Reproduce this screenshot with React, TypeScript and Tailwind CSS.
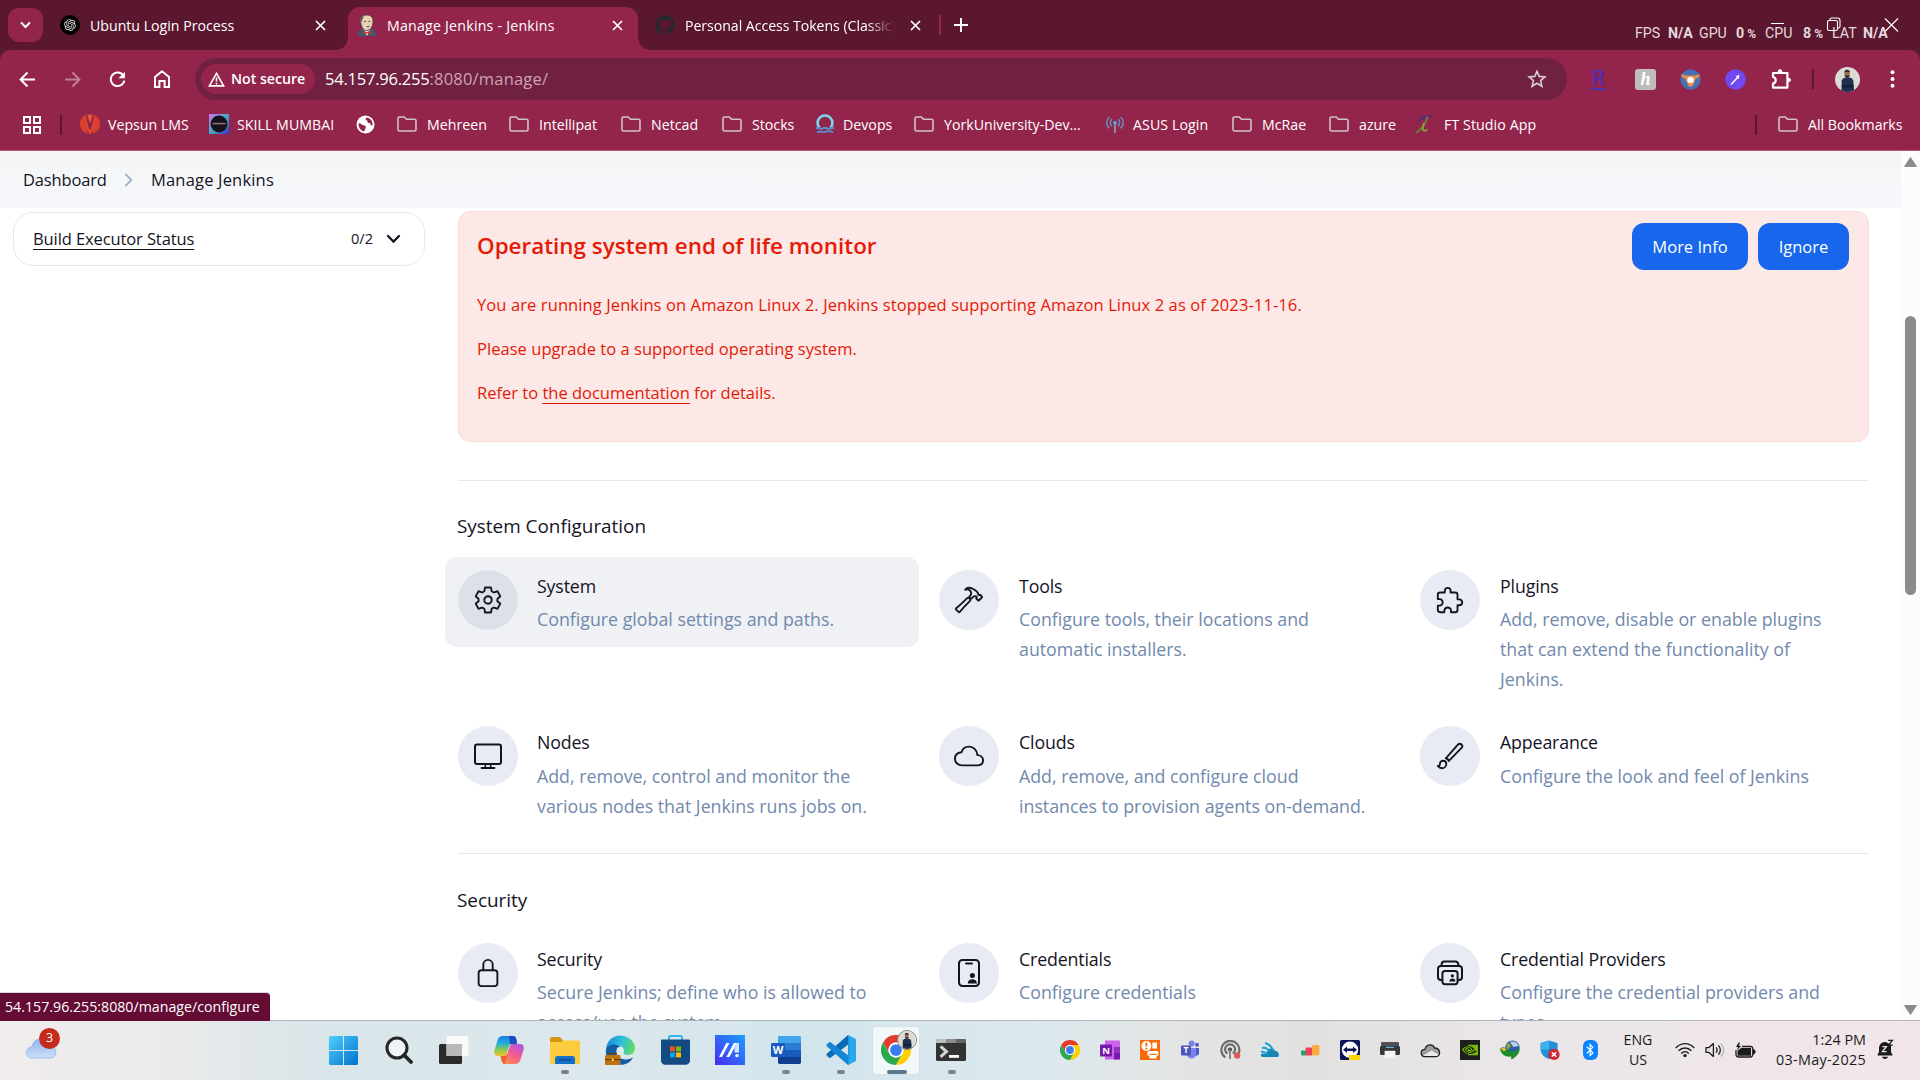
import type { ReactNode } from "react";
import {
  IoSettingsOutline,
  IoHammerOutline,
  IoExtensionPuzzleOutline,
  IoCloudOutline,
  IoBrushOutline,
  IoLockClosedOutline,
} from "react-icons/io5";
import { RiOpenaiFill } from "react-icons/ri";
import { FaGithub, FaBluetoothB } from "react-icons/fa";
import { SiNvidia } from "react-icons/si";

/* ---------- small drawings ---------- */

function ChromeLogo({ size }: { size: number }) {
  return (
    <svg width={size} height={size} viewBox="0 0 48 48">
      <path d="M24 12H44.8A24 24 0 0 0 3.2 12L13.6 30A12 12 0 0 1 24 12Z" fill="#e33b2e" />
      <path d="M13.6 30L3.2 12A24 24 0 0 0 24 48L34.4 30A12 12 0 0 1 13.6 30Z" fill="#2da94f" />
      <path d="M34.4 30L24 48A24 24 0 0 0 44.8 12H24A12 12 0 0 1 34.4 30Z" fill="#fdd000" />
      <circle cx="24" cy="24" r="12" fill="#fff" />
      <circle cx="24" cy="24" r="9.4" fill="#3b7ded" />
    </svg>
  );
}

function Folder() {
  return (
    <svg width="20" height="16" viewBox="0 0 20 16" fill="none" stroke="#cdc3c6" strokeWidth="1.6" strokeLinejoin="round">
      <path d="M1 2.6C1 1.7 1.6 1 2.5 1H7.4L9.4 3.2H17.5C18.4 3.2 19 3.9 19 4.8V13.2C19 14.2 18.4 15 17.5 15H2.5C1.6 15 1 14.2 1 13.2Z" />
    </svg>
  );
}

function Close({ size = 11 }: { size?: number }) {
  return (
    <svg width={size} height={size} viewBox="0 0 11 11" stroke="#fff" strokeWidth="1.7" fill="none">
      <path d="M1 1L10 10M10 1L1 10" />
    </svg>
  );
}

function Avatar({ size }: { size: number }) {
  return (
    <svg width={size} height={size} viewBox="0 0 26 26" className="rounded-full">
      <rect width="26" height="26" fill="#dcdad5" />
      <path d="M6.6 26L7 14C8 11.5 10 11 13 11S18 11.5 19 14L20 26Z" fill="#1f3150" />
      <path d="M7.4 20H19" stroke="#10203a" strokeWidth="2.4" />
      <ellipse cx="12.6" cy="6.8" rx="2.8" ry="4" fill="#9a6f58" />
      <path d="M9.8 5.6C9.6 2 15.6 2 15.4 5.6C14 4.6 11 4.6 9.8 5.6ZM10 8.2C10.6 12.2 14.8 12.2 15.2 8.2C14 9.2 11.2 9.2 10 8.2Z" fill="#2a2322" />
    </svg>
  );
}

function JenkinsFace() {
  return (
    <svg width="20" height="22" viewBox="0 0 20 22">
      <path d="M1 22C1 17 3 15.5 6 14.8L14 14.6C17 15.2 18.6 17 19 22Z" fill="#3f5a70" />
      <path d="M6.5 14.5L10 22L13.5 14.5Z" fill="#f2efea" />
      <path d="M3.6 6C3.6 2.4 6.6 1 10 1C13.6 1 16 3.4 16 7.2C16 12.8 13.2 16.6 9.6 16.6C6 16.6 3.6 12 3.6 6Z" fill="#e9d2b4" stroke="#4b3f38" strokeWidth=".9" />
      <path d="M3.4 9.6C2.6 5 4 2 7 1.2L5.4 6Z" fill="#6d5d50" />
      <path d="M7.2 7.4H8.8M11.6 7.4H13.2M9.6 12.4C10.6 13 12 12.8 12.6 12" stroke="#3a302b" strokeWidth="1" fill="none" />
      <path d="M9.6 18.2L6.8 16.8V20.4L9.8 19.2L13.4 20.6V16.6Z" fill="#d33a2f" />
    </svg>
  );
}

/* ---------- tab strip ---------- */

function Tabs() {
  return (
    <div className="relative flex h-[50px] shrink-0 bg-[#5c1730] text-[14.15px] text-white">
      <div className="flex w-[58px] items-center pl-[8px]">
        <div className="flex h-[34px] w-[35px] items-center justify-center rounded-[11px] bg-[#93254c]">
          <svg width="11" height="8" viewBox="0 0 11 8" stroke="#fff" strokeWidth="2" fill="none">
            <path d="M1 1.4L5.5 6L10 1.4" />
          </svg>
        </div>
      </div>

      <div className="flex w-[290px] items-center pl-[2px]">
        <span className="flex size-[20px] items-center justify-center rounded-full bg-black">
          <RiOpenaiFill size={14} color="#e8e8e8" />
        </span>
        <span className="ml-[10px] w-[225px] pt-px">Ubuntu Login Process</span>
        <Close />
      </div>

      <div className="relative mt-[7px] flex w-[290px] items-center rounded-t-[12px] bg-[#93254c] pb-[7px] pl-[9px]">
        <span className="absolute bottom-0 -left-[12px] size-[12px] bg-[radial-gradient(circle_at_0_0,transparent_11.5px,#93254c_12px)]" />
        <span className="absolute -right-[12px] bottom-0 size-[12px] bg-[radial-gradient(circle_at_100%_0,transparent_11.5px,#93254c_12px)]" />
        <JenkinsFace />
        <span className="ml-[10px] w-[225px] pt-px tracking-[0.24px]">Manage Jenkins - Jenkins</span>
        <Close />
      </div>

      <div className="flex w-[301px] items-center pl-[17px]">
        <FaGithub size={20} color="#24292e" />
        <span className="ml-[10px] w-[214px] overflow-hidden pt-px tracking-[-0.05px] whitespace-nowrap [mask-image:linear-gradient(to_right,#000_85%,transparent_98%)]">
          Personal Access Tokens (Classic)
        </span>
        <span className="ml-[11px]">
          <Close />
        </span>
      </div>
      <div className="mt-[15px] h-[20px] w-[2px] bg-[#93254c]" />
      <div className="flex items-center pl-[13px]">
        <svg width="14" height="14" viewBox="0 0 14 14" stroke="#fff" strokeWidth="2">
          <path d="M7 0V14M0 7H14" />
        </svg>
      </div>

      {/* window buttons with the performance read-out lying over them */}
      <svg className="absolute top-[16px] left-[1765px]" width="140" height="18" viewBox="0 0 140 18" stroke="#fff" fill="none" strokeWidth="1.1">
        <path d="M6 7.5H19M120 2.5L133 15.5M133 2.5L120 15.5" />
        <rect x="62.5" y="4.5" width="10" height="10" rx="1.5" />
        <path d="M65 4.5V3.5A1.5 1.5 0 0 1 66.5 2H72.5A2.5 2.5 0 0 1 75 4.5V10.5A1.5 1.5 0 0 1 73.5 12H72.5" />
      </svg>
      <div className="absolute top-[25px] left-[1635px] flex h-[18px] items-center font-['Roboto'] text-[14.2px] whitespace-nowrap text-[#e6d9de]">
        <span className="w-[33px]">FPS</span>
        <b className="w-[31px]">N/A</b>
        <span className="w-[37px]">GPU</span>
        <b className="w-[29px]">0<span className="ml-[3px] text-[12px]">%</span></b>
        <span className="w-[38px]">CPU</span>
        <b className="w-[29px]">8<span className="ml-[3px] text-[12px]">%</span></b>
        <span className="w-[31px]">LAT</span>
        <b>N/A</b>
      </div>
    </div>
  );
}

/* ---------- toolbar ---------- */

function Toolbar() {
  return (
    <div className="flex h-[58px] shrink-0 items-center rounded-t-[10px] bg-[#93254c]">
      <div className="flex w-[195px] items-center pl-[19px]">
        <svg width="17" height="17" viewBox="0 0 17 17" stroke="#fff" strokeWidth="2" fill="none">
          <path d="M16 8.5H2M8.5 1.5L1.6 8.5L8.5 15.5" />
        </svg>
        <svg className="ml-[28px]" width="17" height="17" viewBox="0 0 17 17" stroke="#c27d97" strokeWidth="2" fill="none">
          <path d="M1 8.5H15M8.5 1.5L15.4 8.5L8.5 15.5" />
        </svg>
        <svg className="ml-[28px]" width="17" height="17" viewBox="0 0 17 17" fill="none">
          <path d="M14.6 5A6.8 6.8 0 1 0 15.3 9.6" stroke="#fff" strokeWidth="2" />
          <path d="M15.9 0.8V7.2H9.5Z" fill="#fff" />
        </svg>
        <svg className="ml-[28px]" width="16" height="18" viewBox="0 0 16 18" stroke="#fff" strokeWidth="2" fill="none">
          <path d="M1 7L8 1.3L15 7V17H10.6V11H5.4V17H1Z" />
        </svg>
      </div>

      <div className="flex h-[42px] w-[1372px] items-center rounded-full bg-[#702040] pl-[6px]">
        <div className="flex h-[30px] w-[114px] items-center rounded-full bg-[#93254c] pl-[7px] text-white">
          <svg width="17" height="15" viewBox="0 0 17 15" stroke="#fff" strokeWidth="1.6" fill="none">
            <path d="M8.5 1.4L15.6 13.9H1.4Z" />
            <path d="M8.5 5.6V9.6M8.5 10.8V12.4" />
          </svg>
          <span className="ml-[6px] text-[14.15px] font-semibold whitespace-nowrap">Not secure</span>
        </div>
        <div className="ml-[10px] w-[1202px] pt-px text-[16.5px] whitespace-nowrap text-[#cfa3b4]">
          <span className="tracking-[-0.22px] text-white">54.157.96.255</span>
          <span className="tracking-[0.2px]">:8080/manage/</span>
        </div>
        <svg width="20" height="20" viewBox="0 0 20 20" fill="none" stroke="#d9ccd1" strokeWidth="1.6">
          <path d="M10 2.2L12.2 7.4L17.9 7.9L13.6 11.6L14.9 17.2L10 14.2L5.1 17.2L6.4 11.6L2.1 7.9L7.8 7.4Z" />
        </svg>
      </div>

      <div className="flex flex-1 items-center">
        <span className="ml-[24px] flex w-[15px] justify-center border-b-2 border-[#4634a8] font-['Roboto'] text-[20px] leading-[19px] font-bold text-[#5b2aa6]">R</span>
        <span className="ml-[29px] flex size-[21px] items-center justify-center rounded-[3px] bg-[#bdbdbd] font-['Liberation_Serif'] text-[18px] leading-none font-bold text-white italic">
          h
        </span>
        <svg className="ml-[24px]" width="21" height="21" viewBox="0 0 21 21">
          <circle cx="10.5" cy="10.5" r="10.2" fill="#4471b4" />
          <path d="M1 5L6 6.6H15L20 5L18.6 8.4L15.4 10L13 16.6L10.5 18L8 16.6L5.6 10L2.4 8.4Z" fill="#ef8c4a" />
          <circle cx="10.5" cy="11" r="3.2" fill="#fff" />
        </svg>
        <svg className="ml-[24px]" width="21" height="21" viewBox="0 0 21 21">
          <circle cx="10.5" cy="10.5" r="10.3" fill="#7149f2" />
          <path d="M6 15.4L12.4 8.8" stroke="#fff" strokeWidth="1.4" />
          <path d="M10.6 7.4L14.4 5.6L13.8 10.2Z" fill="#fff" />
        </svg>
        <svg className="ml-[24px]" width="22" height="22" viewBox="0 0 22 22">
          <path
            d="M3 5H17.4V19.6H3V15.6C6.6 15.2 6.6 9.4 3 9Z"
            fill="none"
            stroke="#fff"
            strokeWidth="2.2"
            strokeLinejoin="round"
          />
          <path d="M7.6 4.6C7.4 .2 12.6 .2 12.4 4.6ZM17.8 9.8C22 9.6 22 14.6 17.8 14.4Z" fill="#fff" />
        </svg>
        <span className="ml-[20px] h-[20px] w-[2px] bg-[#5c1730]" />
        <span className="ml-[21px]">
          <Avatar size={25} />
        </span>
        <svg className="ml-[30px]" width="5" height="18" viewBox="0 0 5 18" fill="#fff">
          <circle cx="2.5" cy="2.2" r="2" />
          <circle cx="2.5" cy="9" r="2" />
          <circle cx="2.5" cy="15.8" r="2" />
        </svg>
      </div>
    </div>
  );
}

/* ---------- bookmarks ---------- */

const vepsun = (
  <svg width="20" height="20" viewBox="0 0 20 20">
    <path d="M6 .8C2 2.6 0 6 0 10C0 14.4 2.8 18.4 7.2 19.6L8 13Z" fill="#d9402c" />
    <path d="M14 .8C18 2.6 20 6 20 10C20 14.4 17.2 18.4 12.8 19.6L12 13Z" fill="#d9402c" />
    <path d="M7.4 .4H12.6L10.6 8H9.4Z" fill="#e65a3c" />
    <path d="M4 3L9 19.8H11L16 3L10.6 15.4H9.4Z" fill="#e8492f" />
  </svg>
);
const skill = (
  <svg width="20" height="20" viewBox="0 0 20 20">
    <defs>
      <linearGradient id="sk" x1="0" y1="0" x2="1" y2="1">
        <stop offset="0" stopColor="#d86bf0" />
        <stop offset=".4" stopColor="#58a8d0" />
        <stop offset=".6" stopColor="#3f9ac0" />
        <stop offset="1" stopColor="#3a2fd0" />
      </linearGradient>
    </defs>
    <rect width="20" height="20" fill="url(#sk)" />
    <circle cx="10" cy="10" r="8.4" fill="#14121a" />
    <path d="M3.4 9.6H16.6" stroke="#8d6f6f" strokeWidth="1.6" />
  </svg>
);
const globe = (
  <svg width="19" height="19" viewBox="0 0 19 19">
    <circle cx="9.5" cy="9.5" r="9" fill="#fff" />
    <path d="M2.6 8.4C5 8 5.4 10.4 8.4 10.4C11 10.6 9.4 13.4 8.2 16.4C5 16 2 12 2.6 8.4Z" fill="#93254c" />
    <path d="M10.6 2.4C9 3.4 9.6 5.4 11.4 5.4C11 7.6 12.4 8.4 14 8C14.4 10 15.4 10.6 16.6 10.4C17 6.4 14.6 3 10.6 2.4Z" fill="#93254c" />
  </svg>
);
const devops = (
  <svg width="20" height="20" viewBox="0 0 20 20" fill="none">
    <path d="M4.6 14A7.4 7.4 0 1 1 15.4 14" stroke="#7fd6ea" strokeWidth="2.6" />
    <path d="M1 14.6C3.6 12 5.4 16 7.6 14.6C9 13.6 11 13.6 12.4 14.6C14.6 16 16.4 12 19 14.6M2 18.4C6 16 8 19 10 18S15 16.6 18 18.4" stroke="#5b8fd0" strokeWidth="1.9" />
  </svg>
);
const asus = (
  <svg width="20" height="20" viewBox="0 0 20 20" fill="none" stroke="#6f86b4" strokeWidth="1.7">
    <path d="M4.4 3C.8 6.4 .8 11 4.4 14.4M7 5.2C4.8 7.2 4.8 10.2 7 12.2M15.6 3C19.2 6.4 19.2 11 15.6 14.4M13 5.2C15.2 7.2 15.2 10.2 13 12.2" />
    <circle cx="10" cy="8.7" r="1.8" fill="#49b6e8" stroke="none" />
    <path d="M10 10V19" stroke="#8f9bbd" />
  </svg>
);
const ft = (
  <svg width="20" height="20" viewBox="0 0 20 20" fill="none">
    <path d="M4 7C8 3 12 2.6 18 2" stroke="#4b2f7d" strokeWidth="1.8" />
    <path d="M13.6 2.6C12 9 8 15 2.4 18.8" stroke="#6d8a40" strokeWidth="1.8" />
    <path d="M9.8 9C8 15 8.6 19 13.4 15.6" stroke="#84a63c" strokeWidth="1.8" />
  </svg>
);

function Bookmark({ icon, label, className }: { icon?: ReactNode; label?: string; className: string }) {
  return (
    <div className={`flex shrink-0 items-center whitespace-nowrap ${className}`}>
      <span className="flex w-[20px] justify-center">{icon ?? <Folder />}</span>
      {label && <span className={icon ? "ml-[8px]" : "ml-[10px]"}>{label}</span>}
    </div>
  );
}

function Bookmarks() {
  return (
    <div className="flex h-[43px] shrink-0 items-center border-b border-[#b4597b] bg-[#93254c] pb-[9px] text-[14.2px] text-white">
      <svg className="ml-[23px]" width="18" height="18" viewBox="0 0 18 18" fill="none" stroke="#fff" strokeWidth="2">
        <path d="M1 1H7V7H1ZM11 1H17V7H11ZM1 11H7V17H1ZM11 11H17V17H11Z" />
      </svg>
      <span className="mr-[18px] ml-[19px] h-[20px] w-[2px] bg-[#5c1730]" />
      <Bookmark icon={vepsun} label="Vepsun LMS" className="w-[129px]" />
      <Bookmark icon={skill} label="SKILL MUMBAI" className="w-[146px] tracking-[0.03px]" />
      <Bookmark icon={globe} className="w-[42px]" />
      <Bookmark label="Mehreen" className="w-[112px]" />
      <Bookmark label="Intellipat" className="w-[112px]" />
      <Bookmark label="Netcad" className="w-[101px]" />
      <Bookmark label="Stocks" className="w-[93px]" />
      <Bookmark icon={devops} label="Devops" className="w-[99px]" />
      <Bookmark label="YorkUniversity-Dev..." className="w-[191px]" />
      <Bookmark icon={asus} label="ASUS Login" className="w-[127px] tracking-[0.08px]" />
      <Bookmark label="McRae" className="w-[97px]" />
      <Bookmark label="azure" className="w-[85px]" />
      <Bookmark icon={ft} label="FT Studio App" className="w-[341px] gap-[2px] tracking-[0.08px]" />
      <span className="mr-[21px] h-[20px] w-[2px] bg-[#5c1730]" />
      <Bookmark label="All Bookmarks" className="w-[130px]" />
    </div>
  );
}

/* ---------- Jenkins page ---------- */

const monitor = (
  <svg width="30" height="30" viewBox="0 0 30 30" fill="none" stroke="#14141f" strokeWidth="2" strokeLinejoin="round">
    <rect x="2" y="3.6" width="26" height="19.4" rx="2" />
    <path d="M8.6 27H21.4" strokeLinecap="round" />
    <path d="M12.6 23L12 27H18L17.4 23" strokeWidth="1.6" />
  </svg>
);
const credentials = (
  <svg width="30" height="30" viewBox="0 0 30 30" fill="none" stroke="#14141f" strokeWidth="2">
    <rect x="5" y="2" width="20" height="26" rx="3.4" />
    <path d="M12 5.6H18" strokeLinecap="round" />
    <circle cx="18.4" cy="17.6" r="2.5" fill="#14141f" stroke="none" />
    <path d="M13.8 25.4C13.8 19.8 23 19.8 23 25.4Z" fill="#14141f" stroke="none" />
  </svg>
);
const providers = (
  <svg width="30" height="30" viewBox="0 0 30 30" fill="none" stroke="#14141f" strokeWidth="2" strokeLinejoin="round">
    <path d="M6.6 8V6.6A3 3 0 0 1 9.6 3.6H20.4A3 3 0 0 1 23.4 6.6V8" />
    <path d="M7.4 22H6A3 3 0 0 1 3 19V11A3 3 0 0 1 6 8H24A3 3 0 0 1 27 11V19A3 3 0 0 1 24 22H22.6" />
    <rect x="7.4" y="13" width="15.2" height="13.2" rx="2.6" />
    <circle cx="17.4" cy="17.8" r="1.6" fill="#14141f" stroke="none" />
    <path d="M14.4 23.4C14.4 19.6 20.4 19.6 20.4 23.4Z" fill="#14141f" stroke="none" />
  </svg>
);

type Item = { title: string; lines: string[]; icon: ReactNode; hovered?: boolean };

const systemItems: Item[] = [
  { title: "System", lines: ["Configure global settings and paths."], icon: <IoSettingsOutline size={30} />, hovered: true },
  { title: "Tools", lines: ["Configure tools, their locations and", "automatic installers."], icon: <IoHammerOutline size={30} /> },
  {
    title: "Plugins",
    lines: ["Add, remove, disable or enable plugins", "that can extend the functionality of", "Jenkins."],
    icon: <IoExtensionPuzzleOutline size={30} />,
  },
  { title: "Nodes", lines: ["Add, remove, control and monitor the", "various nodes that Jenkins runs jobs on."], icon: monitor },
  { title: "Clouds", lines: ["Add, remove, and configure cloud", "instances to provision agents on-demand."], icon: <IoCloudOutline size={30} /> },
  { title: "Appearance", lines: ["Configure the look and feel of Jenkins"], icon: <IoBrushOutline size={30} /> },
];

const securityItems: Item[] = [
  { title: "Security", lines: ["Secure Jenkins; define who is allowed to", "access/use the system."], icon: <IoLockClosedOutline size={30} /> },
  { title: "Credentials", lines: ["Configure credentials"], icon: credentials },
  { title: "Credential Providers", lines: ["Configure the credential providers and", "types"], icon: providers },
];

function ItemGrid({ items }: { items: Item[] }) {
  return (
    <div className="-mx-[13px] grid grid-cols-[474px_474px_474px] items-start gap-x-[7px] gap-y-[6px]">
      {items.map((it, i) => (
        <div key={it.title} className={`flex rounded-[12px] p-[13px] text-[17.8px] leading-[30px] ${it.hovered ? "bg-[#eff1f5]" : ""}`}>
          <div className={`flex size-[60px] shrink-0 items-center justify-center rounded-full text-[#14141f] ${it.hovered ? "bg-[#dce1e9]" : "bg-[#e8ebf3]"}`}>
            {it.icon}
          </div>
          <div className={`whitespace-nowrap ${i % 3 === 0 ? "ml-[19px]" : "ml-[20px]"}`}>
            <div className={`pt-px tracking-[-0.15px] text-[#14141f] ${i > 2 ? "pb-[4px]" : "pb-[3px]"}`}>{it.title}</div>
            <div className="text-[#7189ad]">
              {it.lines.map((l) => (
                <div key={l}>{l}</div>
              ))}
            </div>
          </div>
        </div>
      ))}
    </div>
  );
}

function Page() {
  return (
    <div className="flex min-h-0 flex-1 bg-white">
      <div className="flex min-w-0 flex-1 flex-col overflow-hidden">
        <nav className="flex h-[57px] shrink-0 items-center bg-[linear-gradient(to_bottom,#f3f5f5,#f5f7fa_70%)] pt-px pl-[23px] text-[16.5px] text-[#14141f]">
          <span className="w-[101px] tracking-[-0.15px]">Dashboard</span>
          <svg width="9" height="14" viewBox="0 0 9 14" fill="none" stroke="#9fb0cb" strokeWidth="1.8">
            <path d="M1.4 1L7.4 7L1.4 13" />
          </svg>
          <span className="ml-[18px] tracking-[0.18px]">Manage Jenkins</span>
        </nav>
        <div className="flex min-h-0 flex-1 overflow-hidden">
          <aside className="w-[458px] shrink-0 pt-[4px] pl-[13px]">
            <div className="flex h-[54px] w-[412px] items-center rounded-[20px] border border-[#e8e8f2] pr-[23px] pl-[19px] text-[16.5px] text-[#14141f]">
              <span className="pt-px tracking-[-0.1px] underline decoration-1 underline-offset-[4px]">Build Executor Status</span>
              <span className="mr-[13px] ml-auto text-[14.6px]">0/2</span>
              <svg width="15" height="10" viewBox="0 0 15 10" fill="none" stroke="#14141f" strokeWidth="2.2" strokeLinecap="round">
                <path d="M2 2L7.5 7.6L13 2" />
              </svg>
            </div>
          </aside>
          <main className="w-[1411px] shrink-0 pt-[3px]">
            <section className="flex h-[231px] justify-between rounded-[12px] border border-[#fadbd7] bg-[#fce8e6] pr-[19px] pl-[18px] text-[16.5px] text-[#e51a06]">
              <div>
                <h2 className="mt-[18px] text-[22.4px] leading-[32px] font-semibold tracking-[0.02px]">Operating system end of life monitor</h2>
                <p className="mt-[28px] leading-[30px] tracking-[0.1px]">
                  You are running Jenkins on Amazon Linux 2. Jenkins stopped supporting Amazon Linux 2 as of 2023-11-16.
                </p>
                <p className="mt-[14px] leading-[30px] tracking-[0.04px]">Please upgrade to a supported operating system.</p>
                <p className="mt-[14px] leading-[30px]">
                  Refer to <span className="underline decoration-1 underline-offset-[4px]">the documentation</span> for details.
                </p>
              </div>
              <div className="mt-[11px] flex gap-[10px] text-white">
                <span className="flex h-[47px] w-[116px] items-center justify-center rounded-[12px] bg-[#1866ec] pt-[2px]">More Info</span>
                <span className="flex h-[47px] w-[91px] items-center justify-center rounded-[12px] bg-[#1866ec] pt-[2px]">Ignore</span>
              </div>
            </section>

            <hr className="mt-[38px] border-t border-[#e7e7ea]" />
            <h3 className="mt-[30px] mb-[16px] -ml-px text-[18.9px] leading-[30px] text-[#14141f]">System Configuration</h3>
            <ItemGrid items={systemItems} />

            <hr className="mt-[19px] border-t border-[#e7e7ea]" />
            <h3 className="mt-[31px] mb-[15px] -ml-px text-[18.9px] leading-[30px] text-[#14141f]">Security</h3>
            <ItemGrid items={securityItems} />
          </main>
        </div>
      </div>

      <div className="flex w-[19px] shrink-0 flex-col items-center bg-[#fcfcfc]">
        <svg className="mt-[6px]" width="13" height="10" viewBox="0 0 13 10" fill="#8b8b8b">
          <path d="M6.5 0.6L12.4 9.4H0.6Z" stroke="#8b8b8b" strokeLinejoin="round" />
        </svg>
        <div className="mt-[149px] h-[279px] w-[11px] rounded-full bg-[#8b8b8b]" />
        <svg className="mt-auto mb-[5px]" width="13" height="10" viewBox="0 0 13 10" fill="#8b8b8b">
          <path d="M6.5 9.4L12.4 0.6H0.6Z" stroke="#8b8b8b" strokeLinejoin="round" />
        </svg>
      </div>
    </div>
  );
}

/* ---------- taskbar ---------- */

const startIcon = (
  <svg width="29" height="29" viewBox="0 0 29 29">
    <defs>
      <linearGradient id="win" x1="0" y1="0" x2="1" y2="1">
        <stop offset="0" stopColor="#4fd0fa" />
        <stop offset="1" stopColor="#0070d0" />
      </linearGradient>
    </defs>
    <path d="M0 1.5A1.5 1.5 0 0 1 1.5 0H14V14H0ZM15 0H27.5A1.5 1.5 0 0 1 29 1.5V14H15ZM0 15H14V29H1.5A1.5 1.5 0 0 1 0 27.5ZM15 15H29V27.5A1.5 1.5 0 0 1 27.5 29H15Z" fill="url(#win)" />
  </svg>
);
const searchIcon = (
  <svg width="28" height="28" viewBox="0 0 28 28" fill="none" stroke="#262626" strokeWidth="3">
    <circle cx="12" cy="12" r="10" fill="#eef3f5" />
    <path d="M19 19L26 26" strokeWidth="3.8" strokeLinecap="round" />
  </svg>
);
const taskView = (
  <svg width="30" height="28" viewBox="0 0 30 28">
    <rect x="0" y="8" width="23" height="20" rx="1.5" fill="#2a2a2a" />
    <rect x="7.5" y="0" width="22" height="20" rx="1.5" fill="#fafafa" />
    <rect x="7.5" y="8" width="15.5" height="12" fill="#b9b9b9" />
  </svg>
);
const copilot = (
  <svg width="30" height="28" viewBox="0 0 30 28">
    <defs>
      <linearGradient id="cp1" x1="0" y1="0" x2="0" y2="1">
        <stop offset="0" stopColor="#1f7be8" />
        <stop offset=".35" stopColor="#1cb0d8" />
        <stop offset=".7" stopColor="#8cc850" />
        <stop offset="1" stopColor="#f5c32c" />
      </linearGradient>
      <linearGradient id="cp2" x1="1" y1="0" x2="0.3" y2="1">
        <stop offset="0" stopColor="#9a5ce8" />
        <stop offset=".5" stopColor="#f0579a" />
        <stop offset="1" stopColor="#ff8a4c" />
      </linearGradient>
    </defs>
    <path d="M9 0H19C21.4 0 22 2 22.6 4.4L23 8H18C16.4 8 15.4 9 15 10.6L12.6 18C12 19.4 11 20 9.4 20H4C0.6 20 -0.4 17.4 .6 14L3.4 4.4C4.4 1.4 6 0 9 0Z" fill="url(#cp1)" />
    <path d="M15 0H19C21.4 0 22 2 22.6 4.4L23 8H18L16 8Z" fill="#1d49c4" />
    <path d="M21 28H11C8.6 28 8 26 7.4 23.6L6.6 20H10C12 20 13 19 13.6 17L16 10C16.6 8.6 17.6 8 19 8H26C29.6 8 30.4 10.6 29.4 14L26.6 23.6C25.6 26.6 24 28 21 28Z" fill="url(#cp2)" />
    <path d="M7.4 23.6L6.6 20H10C12 20 13 19 13.6 17L11 28C8.6 28 8 26 7.4 23.6Z" fill="#f0602f" />
  </svg>
);
const explorer = (
  <svg width="30" height="27" viewBox="0 0 30 27">
    <path d="M0 2A2 2 0 0 1 2 0H10L13 3.4V8H0Z" fill="#d9960a" />
    <path d="M0 5H11L13.4 3.6H28.4A1.6 1.6 0 0 1 30 5.2V25.4A1.6 1.6 0 0 1 28.4 27H1.6A1.6 1.6 0 0 1 0 25.4Z" fill="#fccb3e" />
    <path d="M5 27V21.4A2.4 2.4 0 0 1 7.4 19H22.6A2.4 2.4 0 0 1 25 21.4V27Z" fill="#1273c9" />
    <path d="M8.6 22.8H21.4" stroke="#0c4d94" strokeWidth="1.6" />
  </svg>
);
const edge = (
  <svg width="30" height="30" viewBox="0 0 30 30">
    <defs>
      <linearGradient id="ed1" x1="0" y1="0.4" x2="1" y2="0.6">
        <stop offset="0" stopColor="#1a8ad8" />
        <stop offset=".5" stopColor="#2cc0dc" />
        <stop offset="1" stopColor="#68dc5a" />
      </linearGradient>
    </defs>
    <path d="M1 15A14.4 14.4 0 0 1 15 .4C24 .4 30 7 30 13C30 17.4 26.6 20 23 20C20 20 18.4 19 18.6 17.6C19.6 12 15 9.6 10 9.6C5 9.6 2 12.4 1 15Z" fill="url(#ed1)" />
    <path d="M1 15C2 9 13 6.6 17 13.6C14 11 10 15 12 19.6C14 25 21 26 28 22.4C25 28.4 19 30.4 13 29.4C4 27.4 0 21 1 15Z" fill="#125da8" />
    <circle cx="15.2" cy="15.4" r="3.6" fill="#dcebf0" />
    <rect x="0" y="20" width="15.4" height="10" rx="1" fill="#bf7210" />
    <path d="M4.6 20V18.4H10.8V20M0 24.6H15.4" stroke="#6e3c06" strokeWidth="1.4" fill="none" />
    <rect x="6.8" y="23.6" width="2" height="2.4" fill="#ffd45c" />
  </svg>
);
const store = (
  <svg width="29" height="30" viewBox="0 0 29 30">
    <path d="M8 7V2.4A1.4 1.4 0 0 1 9.4 1H19.6A1.4 1.4 0 0 1 21 2.4V7" fill="none" stroke="#2fb9ee" strokeWidth="2" />
    <path d="M0 5.4A1 1 0 0 1 1 4.6H28A1 1 0 0 1 29 5.4V25.4A4.4 4.4 0 0 1 24.6 29.8H4.4A4.4 4.4 0 0 1 0 25.4Z" fill="#144a82" />
    <path d="M9 11.4H14V16.4H9Z" fill="#f25022" />
    <path d="M15 11.4H20V16.4H15Z" fill="#7fba00" />
    <path d="M9 17.4H14V22.4H9Z" fill="#00a4ef" />
    <path d="M15 17.4H20V22.4H15Z" fill="#ffb900" />
  </svg>
);
const myAsus = (
  <svg width="30" height="30" viewBox="0 0 30 30">
    <defs>
      <linearGradient id="ma" x1="0" y1="1" x2="1" y2="0">
        <stop offset="0" stopColor="#4a2cf0" />
        <stop offset="1" stopColor="#18a0ff" />
      </linearGradient>
    </defs>
    <rect width="30" height="30" fill="url(#ma)" />
    <path d="M4 22L11.4 8H14.4L7 22Z" fill="#fff" />
    <path d="M11.4 22L18.8 8H22L14.4 22Z" fill="#fff" />
    <path d="M19.6 12.4L22 8H24V17.6H19.6Z" fill="#d7e2ff" />
    <circle cx="22" cy="20.6" r="1.7" fill="#fff" />
  </svg>
);
const word = (
  <svg width="30" height="28" viewBox="0 0 30 28">
    <path d="M7 1.4A1.4 1.4 0 0 1 8.4 0H28.6A1.4 1.4 0 0 1 30 1.4V7H7Z" fill="#41a5ee" />
    <path d="M7 7H30V14H7Z" fill="#2b7cd3" />
    <path d="M7 14H30V21H7Z" fill="#185abd" />
    <path d="M7 21H30V26.6A1.4 1.4 0 0 1 28.6 28H8.4A1.4 1.4 0 0 1 7 26.6Z" fill="#103f91" />
    <rect x="0" y="7" width="14" height="14" rx="1.3" fill="#185abd" />
    <text x="7" y="18" textAnchor="middle" fontSize="11" fontWeight="700" fill="#fff" fontFamily="Open Sans, sans-serif">W</text>
  </svg>
);
const vscode = (
  <svg width="30" height="30" viewBox="0 0 30 30">
    <path d="M22 0L29 3.4A1.8 1.8 0 0 1 30 5V25A1.8 1.8 0 0 1 29 26.6L22 30Z" fill="#2ba7ee" />
    <path d="M22 0L1 18.6C.2 19.4 .2 20.2 1 20.8L2.8 22.4C3.4 23 4.2 23 4.8 22.6L23 9Z" fill="#0a6cb8" />
    <path d="M22 30L1 11.4C.2 10.6 .2 9.8 1 9.2L2.8 7.6C3.4 7 4.2 7 4.8 7.4L23 21Z" fill="#1486d6" />
    <path d="M22 0L23.6 1V29L22 30Z" fill="#1f9ae4" />
  </svg>
);
const terminal = (
  <svg width="30" height="22" viewBox="0 0 30 22">
    <rect width="30" height="22" rx="1.5" fill="#333" />
    <path d="M0 4V1.5A1.5 1.5 0 0 1 1.5 0H10V4Z" fill="#bdbdbd" />
    <path d="M10 0H20V4H10Z" fill="#8d8d8d" />
    <path d="M20 0H28.5A1.5 1.5 0 0 1 30 1.5V4H20Z" fill="#666" />
    <path d="M4.6 7.4L10.4 12.6L4.6 17.8" stroke="#d6d6d6" strokeWidth="3" fill="none" />
    <path d="M13 17.4H23" stroke="#fff" strokeWidth="2.8" />
  </svg>
);

const apps: { name: string; icon: ReactNode; running?: boolean }[] = [
  { name: "start", icon: startIcon },
  { name: "search", icon: searchIcon },
  { name: "taskview", icon: taskView },
  { name: "copilot", icon: copilot },
  { name: "explorer", icon: explorer, running: true },
  { name: "edge", icon: edge },
  { name: "store", icon: store },
  { name: "myasus", icon: myAsus },
  { name: "word", icon: word, running: true },
  { name: "vscode", icon: vscode, running: true },
  { name: "chrome", icon: <ChromeLogo size={30} /> },
  { name: "terminal", icon: terminal, running: true },
];

const tray: ReactNode[] = [
  <ChromeLogo size={20} />,
  <svg width="20" height="20" viewBox="0 0 20 20">
    <path d="M5 0.6H19A1 1 0 0 1 20 1.6V19.4H5Z" fill="#ca64ea" />
    <path d="M14 7H20V13H14Z" fill="#9332bf" />
    <path d="M14 13H20V19.4H14Z" fill="#7719aa" />
    <rect x="0" y="4.4" width="12" height="12" rx="1" fill="#7719aa" />
    <text x="6" y="14" textAnchor="middle" fontSize="9.5" fontWeight="700" fill="#fff" fontFamily="Open Sans, sans-serif">N</text>
  </svg>,
  <svg width="20" height="20" viewBox="0 0 20 20">
    <rect width="20" height="20" fill="#fb6a0a" />
    <circle cx="6.4" cy="6" r="5" fill="#fff" />
    <path d="M6.4 2.6V6.6M6.4 7.8V9.4" stroke="#fb6a0a" strokeWidth="1.8" />
    <path d="M12.4 2.4H17V8.6H12.4ZM7.4 12.6C7.4 11.6 8.4 11 9.4 11H16.6C17.6 11 18.4 11.6 18.4 12.6V15.6H16.6V18.6H9.4V15.6H7.4Z" fill="#fff" />
    <path d="M9.4 14.4H16.6" stroke="#fb6a0a" strokeWidth="1.1" />
  </svg>,
  <svg width="20" height="20" viewBox="0 0 20 20">
    <circle cx="11.6" cy="3.6" r="3" fill="#7b83eb" />
    <circle cx="17" cy="4.8" r="2" fill="#5059c9" />
    <path d="M13 8H19V13C19 16 15.4 16.4 14 15Z" fill="#5059c9" />
    <path d="M7 8H16V14C16 20 7 20 7 14Z" fill="#7b83eb" />
    <rect x="1" y="5.4" width="10" height="10" rx="1" fill="#4b53bc" />
    <text x="6" y="13.4" textAnchor="middle" fontSize="8.5" fontWeight="700" fill="#fff" fontFamily="Open Sans, sans-serif">T</text>
  </svg>,
  <svg width="21" height="21" viewBox="0 0 21 21" fill="none">
    <path d="M5.4 17.4A9 9 0 1 1 15 17.6M7.4 13.6A5 5 0 1 1 12.8 13.6" stroke="#6d6d6d" strokeWidth="2.2" />
    <circle cx="10" cy="9.6" r="2.2" fill="#555" />
    <path d="M9 10H11V19H9Z" fill="#888" />
    <circle cx="17.2" cy="15.4" r="3.2" fill="#e05a5a" />
  </svg>,
  <svg width="20" height="16" viewBox="0 0 20 16">
    <path d="M3 15C0 15 .4 11.6 2.6 11.6L6 12C8 5 14 5 15 9C19 8.4 20.4 15 16.6 15Z" fill="#1a86b4" />
    <path d="M2 6C5 5 8 7 9.4 9.6M5 1C9 2 12 5 12.6 8.4M1 9.4L8 11.6" stroke="#12a0d4" strokeWidth="2" fill="none" />
  </svg>,
  <svg width="20" height="14" viewBox="0 0 20 14">
    <rect x="1" y="7.6" width="5.4" height="4.8" rx="1" fill="#1ea672" />
    <rect x="5.6" y="4.4" width="6.6" height="8" rx="1" fill="#ee4058" />
    <rect x="12" y="2" width="7.4" height="10.4" rx="1.4" fill="#fbab3d" />
  </svg>,
  <svg width="20" height="20" viewBox="0 0 20 20">
    <rect width="20" height="20" rx="1.5" fill="#0c1458" />
    <circle cx="10" cy="9.8" r="8.2" fill="#fff" />
    <path d="M3 9.8L7 6.6V8.6H13V6.6L17 9.8L13 13V11H7V13Z" fill="#0c1458" />
    <rect x="9" y="15" width="11" height="5" fill="#ffd400" />
  </svg>,
  <svg width="20" height="18" viewBox="0 0 20 18">
    <rect x="1" y="1" width="18" height="5" rx="1" fill="#4c5258" />
    <rect x="0" y="5" width="20" height="9" rx="1.4" fill="#33383d" />
    <path d="M4.6 9.8H15.4V17H4.6Z" fill="#f4f4f4" />
    <path d="M6 6.4H14" stroke="#6cb3e8" strokeWidth="1.2" />
  </svg>,
  <svg width="21" height="15" viewBox="0 0 21 15">
    <path d="M5 13.6C-.4 13.6 .2 6.4 5 6.4C6 1 13 .2 14.6 5C20.6 4.8 21.4 13.6 16 13.6Z" fill="#9c9c9c" stroke="#1f1f1f" strokeWidth="1.3" />
    <path d="M3 12.6L11.6 7.4L18.6 11.6C18 13 17 13 16 13H5C4 13 3.4 12.9 3 12.6Z" fill="#e9e9e9" />
  </svg>,
  <span className="flex size-[20px] items-center justify-center bg-[#1c1f1c]">
    <SiNvidia size={16} color="#76b900" />
  </span>,
  <svg width="20" height="20" viewBox="0 0 20 20">
    <circle cx="12.4" cy="7.6" r="7.2" fill="#2f5f9e" />
    <path d="M10 2C14 .6 18 3 18.6 6L13.4 7Z" fill="#b9cfe6" />
    <path d="M6.4 4C9 1.4 11 4 10.4 7L7 10Z" fill="#8da83c" />
    <path d="M0 9C2 6.4 5 6.8 6.4 9.4L13 12L19.6 8.4C20 13 16 17 11.4 19.6L11 16.6C5 17.4 1 14 0 9Z" fill="#1e8c2c" />
    <path d="M.6 9C2.4 7 5 7.4 6.4 9.8L4 11.6Z" fill="#e0b93a" />
  </svg>,
  <svg width="20" height="20" viewBox="0 0 20 20">
    <path d="M9 .6L17.6 3V9C17.6 14 14 17.4 9 19C4 17.4 .6 14 .6 9V3Z" fill="#2390d8" />
    <path d="M9 .6V9.6H.6V3Z" fill="#3fb0ea" />
    <path d="M17.6 9.6H9V19C14 17.4 17.6 14 17.6 9.6Z" fill="#1b78c4" />
    <circle cx="14" cy="14.4" r="5.6" fill="#d3242f" />
    <path d="M11.8 12.2L16.2 16.6M16.2 12.2L11.8 16.6" stroke="#fff" strokeWidth="1.5" />
  </svg>,
  <span className="flex h-[20px] w-[15px] items-center justify-center rounded-[6px] bg-[#0a84ff]">
    <FaBluetoothB size={14} color="#fff" />
  </span>,
];

function Taskbar() {
  return (
    <div className="relative flex h-[60px] shrink-0 border-t border-[#b1b5b8] bg-[linear-gradient(to_right,#f0edec_0%,#ecebeb_8%,#d9e5e9_17%,#dde8ec_30%,#d2e5ec_42%,#dce9ee_54%,#e3e6e6_60%,#e2e1df_68%,#eae6e7_78%,#f2e6ea_100%)] pb-px">
      <div className="relative w-[316px] shrink-0">
        <svg className="absolute top-[17px] left-[26px]" width="31" height="21" viewBox="0 0 31 21">
          <defs>
            <linearGradient id="wc" x1="0" y1="0" x2="0" y2="1">
              <stop offset="0" stopColor="#8db4ee" />
              <stop offset="1" stopColor="#cfe0fa" />
            </linearGradient>
          </defs>
          <path d="M6 20C-2 20 -1 9 6 9C7 -1 20 -2 22 8C31 6 33 20 24 20Z" fill="url(#wc)" stroke="#8fb2ea" strokeWidth=".8" />
        </svg>
        <span className="absolute top-[7px] left-[39px] flex size-[21px] items-center justify-center rounded-full bg-[#c42b1c] text-[12.5px] text-white">3</span>
      </div>

      {apps.map((a) => (
        <div key={a.name} className="relative flex w-[55.25px] shrink-0 items-center justify-center">
          {a.name === "chrome" ? (
            <div className="relative flex h-[49px] w-[48px] items-center justify-center rounded-[5px] border border-[#d8e0e4] bg-[#f2f7f9]">
              {a.icon}
              <span className="absolute top-[3px] right-[2px] rounded-full border border-[#7d8287]">
                <Avatar size={18} />
              </span>
              <span className="absolute bottom-0 left-[14px] h-[4px] w-[20px] rounded-full bg-[#587a8c]" />
            </div>
          ) : (
            a.icon
          )}
          {a.running && <span className="absolute bottom-[5px] left-[24px] h-[4px] w-[8px] rounded-full bg-[#7d8285]" />}
        </div>
      ))}

      <div className="ml-[71px] flex items-center">
        {tray.map((t, i) => (
          <div key={i} className="flex w-[40px] justify-center">
            {t}
          </div>
        ))}
      </div>

      <div className="ml-[8px] flex w-[40px] flex-col items-center justify-center text-[14.2px] leading-[20px] text-[#1b1b1b]">
        <span>ENG</span>
        <span>US</span>
      </div>

      <div className="ml-[17px] flex items-center">
        <svg width="20" height="16" viewBox="0 0 20 16" fill="none" stroke="#1b1b1b" strokeWidth="1.4">
          <path d="M.8 6C6 .2 14 .2 19.2 6M3.6 8.8C7.2 5 12.8 5 16.4 8.8M6.2 11.4C8.4 9.2 11.6 9.2 13.8 11.4" />
          <circle cx="10" cy="13.6" r="1.7" fill="#1b1b1b" stroke="none" />
        </svg>
        <svg className="ml-[10px]" width="20" height="16" viewBox="0 0 20 16" fill="none" stroke="#1b1b1b" strokeWidth="1.3">
          <path d="M1 5.6H4L8.4 1.6V14.4L4 10.4H1Z" strokeLinejoin="round" />
          <path d="M11 5.4C12.4 7 12.4 9 11 10.6M13.4 3.4C16 6 16 10 13.4 12.6" />
          <path d="M15.8 1.6C19.6 5 19.6 11 15.8 14.4" stroke="#b9b4b6" />
        </svg>
        <svg className="ml-[10px]" width="21" height="17" viewBox="0 0 21 17" fill="none" stroke="#1b1b1b" strokeWidth="1.3">
          <path d="M7 4.4H15.4A2.4 2.4 0 0 1 17.8 6.8V12.6A2.4 2.4 0 0 1 15.4 15H3.4A2.4 2.4 0 0 1 1 12.6V8" />
          <path d="M6.6 6.4H15.4V13H3.2V9Z" fill="#1b1b1b" />
          <path d="M18.6 7.8C20.4 8.2 20.4 11.2 18.6 11.6Z" fill="#1b1b1b" />
          <path d="M3.6 .4L1 5H3L2 8.4L6 3.8H3.8L5 .4Z" fill="#1b1b1b" stroke="none" />
        </svg>
      </div>

      <div className="ml-[17px] flex w-[93px] flex-col items-end justify-center text-[14.4px] leading-[20px] whitespace-nowrap text-[#1b1b1b]">
        <span>1:24 PM</span>
        <span className="tracking-[0.3px]">03-May-2025</span>
      </div>
      <svg className="mt-[18px] ml-[11px]" width="17" height="21" viewBox="0 0 17 21">
        <path d="M8 3C4 3 2 6 2 9.4V13L.6 15.6V16.4H15.4V15.6L14 13V6L9 3Z" fill="#1b1b1b" />
        <path d="M5 17.8H11C10.4 20.6 5.6 20.6 5 17.8Z" fill="#1b1b1b" />
        <path d="M5.4 7.6H9.4L5.4 12.6H9.6" stroke="#f0e6ea" strokeWidth="1.3" fill="none" />
        <path d="M11.2 1.4H15.4L11.4 6.2H15.8" stroke="#1b1b1b" strokeWidth="1.3" fill="none" />
      </svg>
    </div>
  );
}

export default function App() {
  return (
    <div className="relative flex h-[1080px] w-[1920px] flex-col overflow-hidden bg-[#5c1730] font-['Open_Sans','Noto_Sans',sans-serif]">
      <Tabs />
      <Toolbar />
      <Bookmarks />
      <Page />
      <Taskbar />
      <div className="absolute top-[992px] left-0 flex h-[29px] w-[270px] items-center rounded-tr-[4px] border-t border-[#d9d5d7] bg-[#640c33] pl-[5px] text-[14.2px] whitespace-nowrap text-white">
        54.157.96.255:8080/manage/configure
      </div>
    </div>
  );
}
